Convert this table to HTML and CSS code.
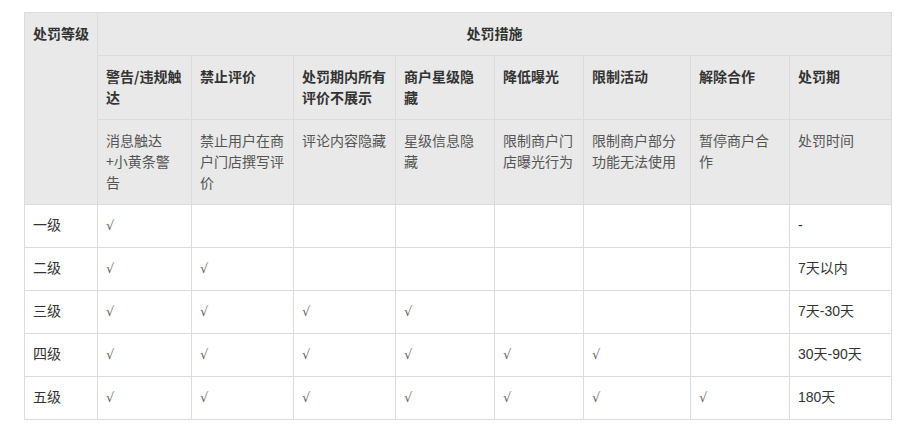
FILE: index.html
```html
<!DOCTYPE html>
<html lang="zh">
<head>
<meta charset="utf-8">
<link rel="stylesheet" href="styles.css">
</head>
<body>
<div class="wrap">
<table class="grid">
<colgroup>
<col class="c1"><col class="c2"><col class="c3"><col class="c4"><col class="c5"><col class="c6"><col class="c7"><col class="c8"><col class="c9">
</colgroup>
<thead>
<tr><th rowspan="3">处罚等级</th><th colspan="8" class="center">处罚措施</th></tr>
<tr><th>警告/违规触达</th><th>禁止评价</th><th>处罚期内所有评价不展示</th><th>商户星级隐藏</th><th>降低曝光</th><th>限制活动</th><th>解除合作</th><th>处罚期</th></tr>
<tr class="desc"><td>消息触达+小黄条警告</td><td>禁止用户在商户门店撰写评价</td><td>评论内容隐藏</td><td>星级信息隐藏</td><td>限制商户门店曝光行为</td><td>限制商户部分功能无法使用</td><td>暂停商户合作</td><td>处罚时间</td></tr>
</thead>
<tbody>
<tr><td>一级</td><td class="ck">√</td><td></td><td></td><td></td><td></td><td></td><td></td><td>-</td></tr>
<tr><td>二级</td><td class="ck">√</td><td class="ck">√</td><td></td><td></td><td></td><td></td><td></td><td>7天以内</td></tr>
<tr><td>三级</td><td class="ck">√</td><td class="ck">√</td><td class="ck">√</td><td class="ck">√</td><td></td><td></td><td></td><td>7天-30天</td></tr>
<tr><td>四级</td><td class="ck">√</td><td class="ck">√</td><td class="ck">√</td><td class="ck">√</td><td class="ck">√</td><td class="ck">√</td><td></td><td>30天-90天</td></tr>
<tr><td>五级</td><td class="ck">√</td><td class="ck">√</td><td class="ck">√</td><td class="ck">√</td><td class="ck">√</td><td class="ck">√</td><td class="ck">√</td><td>180天</td></tr>
</tbody>
</table>
</div>
</body>
</html>
```
FILE: styles.css
```css
html, body { margin: 0; padding: 0; background: #fff; }
.wrap { padding: 12px 24px; }
.grid {
  border-collapse: collapse;
  table-layout: fixed;
  width: 867px;
  font-family: "Liberation Sans", Arial, "Noto Sans CJK SC", sans-serif;
  font-size: 14px;
  line-height: 21px;
  color: #333;
}
.c1 { width: 73px; }
.c2 { width: 94px; }
.c3 { width: 102px; }
.c4 { width: 102px; }
.c5 { width: 99px; }
.c6 { width: 89px; }
.c7 { width: 107px; }
.c8 { width: 99px; }
.c9 { width: 102px; }
.grid th, .grid td {
  border: 1px solid #dcdcdc;
  padding: 10px 8px 11px;
  text-align: left;
  vertical-align: top;
}
.grid thead th, .grid thead td {
  background: #e9e9e9;
  font-family: "Noto Sans CJK SC", "Liberation Sans", sans-serif;
}
.grid th { font-weight: bold; color: #333; }
.grid th.center { text-align: center; }
.grid .desc td { color: #555; }
.grid tbody td { vertical-align: middle; }
.grid td.ck { color: #666; font-family: "DejaVu Serif", "Liberation Serif", serif; font-size: 13px; }
```
